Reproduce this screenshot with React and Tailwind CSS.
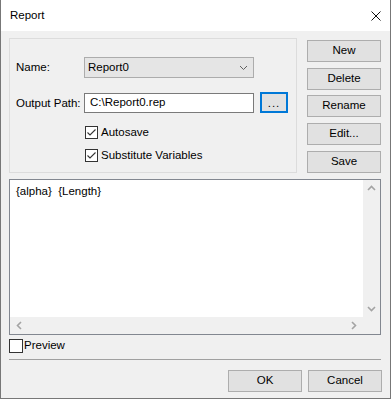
import React from "react";

function Check({ checked }) {
  return (
    <span className="w-[13px] h-[13px] border border-[#333333] bg-white flex items-center justify-center shrink-0">
      {checked && (
        <svg width="11" height="11" viewBox="0 0 11 11">
          <path d="M1.5 5.5 L4 8 L9.5 2.5" stroke="#333333" strokeWidth="1.1" fill="none" />
        </svg>
      )}
    </span>
  );
}

function Btn({ children, className = "" }) {
  return (
    <div
      className={
        "h-[22px] w-[74px] bg-[#e1e1e1] border border-[#adadad] flex items-center justify-center text-black " +
        className
      }
    >
      {children}
    </div>
  );
}

function Chevron({ dir, color = "#a3a3a3", size = 9, width = 1.6 }) {
  // small scroll arrows and combo arrow
  const d = {
    up: "M1 6 L4.5 2.5 L8 6",
    down: "M1 3 L4.5 6.5 L8 3",
    left: "M6 1 L2.5 4.5 L6 8",
    right: "M3 1 L6.5 4.5 L3 8",
  }[dir];
  return (
    <svg width={size} height={size} viewBox="0 0 9 9">
      <path d={d} stroke={color} strokeWidth={width} fill="none" />
    </svg>
  );
}

export default function App() {
  return (
    <div className="w-[391px] h-[399px] bg-[#f0f0f0] border-x border-b border-[#777777] flex flex-col text-[11.5px] text-black font-['Liberation_Sans',Arial,sans-serif] overflow-hidden">
      {/* title bar */}
      <div className="h-[31px] bg-white flex items-center justify-between pl-[9px] pr-[9px] shrink-0">
        <span className="text-[11.5px]">Report</span>
        <svg width="10" height="10" viewBox="0 0 10 10">
          <path d="M0.5 0.5 L9.5 9.5 M9.5 0.5 L0.5 9.5" stroke="#111" strokeWidth="1" />
        </svg>
      </div>

      <div className="flex flex-col px-[8px] pt-[7px]">
        <div className="flex gap-[10px]">
          {/* settings group */}
          <div className="w-[288px] h-[135px] border border-[#dcdcdc] pl-[6px] pt-[18px] flex flex-col">
            <div className="flex items-center h-[21px]">
              <span className="w-[68px]">Name:</span>
              <div className="w-[170px] h-[21px] bg-[#e5e5e5] border border-[#acacac] flex items-center justify-between pl-[3px] pr-[5px]">
                <span>Report0</span>
                <Chevron dir="down" color="#606060" size={9} width={1} />
              </div>
            </div>
            <div className="flex items-start h-[21px] mt-[14px]">
              <span className="w-[68px] mt-[3px]">Output Path:</span>
              <div className="w-[170px] h-[20px] mt-[1px] bg-white border border-[#7a7a7a] flex items-center pl-[5px]">
                C:\Report0.rep
              </div>
              <div className="ml-[6px] w-[28px] h-[21px] bg-[#e1e1e1] border-2 border-[#0078d7] flex items-center justify-center leading-none pt-[3px] tracking-[1px]">
                ...
              </div>
            </div>
            <div className="flex items-center gap-[3px] ml-[69px] mt-[13px] h-[13px]">
              <Check checked />
              <span>Autosave</span>
            </div>
            <div className="flex items-center gap-[3px] ml-[69px] mt-[10px] h-[13px]">
              <Check checked />
              <span>Substitute Variables</span>
            </div>
          </div>

          {/* action buttons */}
          <div className="flex flex-col pt-[2px]">
            <Btn>New</Btn>
            <Btn className="mt-[6px]">Delete</Btn>
            <Btn className="mt-[5px]">Rename</Btn>
            <Btn className="mt-[6px]">Edit...</Btn>
            <Btn className="mt-[6px]">Save</Btn>
          </div>
        </div>

        {/* text area */}
        <div className="mt-[6px] w-[372px] h-[156px] border border-[#828790] bg-white flex flex-col">
          <div className="flex flex-1">
            <div className="flex-1 pl-[6px] pt-[3px] whitespace-pre">{"{alpha}  {Length}"}</div>
            <div className="w-[17px] bg-[#f0f0f0] flex flex-col justify-between items-center py-[4px]">
              <Chevron dir="up" />
              <Chevron dir="down" />
            </div>
          </div>
          <div className="h-[17px] flex bg-[#f0f0f0]">
            <div className="flex-1 flex items-center justify-between px-[5px]">
              <Chevron dir="left" />
              <Chevron dir="right" />
            </div>
            <div className="w-[17px]" />
          </div>
        </div>

        <div className="flex items-center gap-[1px] mt-[4px] h-[14px]">
          <span className="w-[14px] h-[14px] border border-[#333333] bg-white" />
          <span>Preview</span>
        </div>

        <div className="mt-[6px] mr-[1px] h-px bg-[#a0a0a0]" />

        <div className="flex justify-end gap-[6px] mt-[10px]">
          <Btn>OK</Btn>
          <Btn>Cancel</Btn>
        </div>
      </div>
    </div>
  );
}
